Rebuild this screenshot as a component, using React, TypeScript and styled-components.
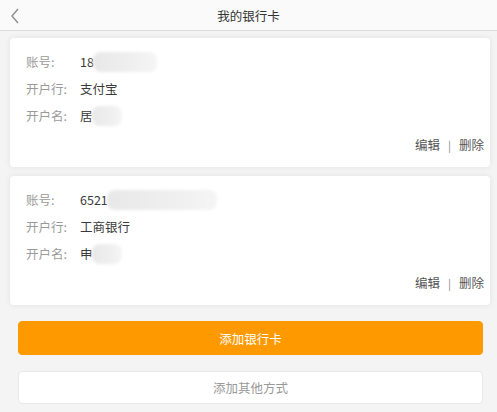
import React from 'react'
import styled, { createGlobalStyle } from 'styled-components'

const GlobalStyle = createGlobalStyle`
  html, body {
    margin: 0;
    padding: 0;
    background: #f4f4f4;
    font-family: "Noto Sans CJK SC", "Liberation Sans", sans-serif;
  }
`

type Card = {
  account: string
  accountBlur: number
  bank: string
  name: string
  nameBlur: number
}

const cards: Card[] = [
  { account: '18', accountBlur: 64, bank: '支付宝', name: '居', nameBlur: 30 },
  { account: '6521', accountBlur: 110, bank: '工商银行', name: '申', nameBlur: 30 },
]

function App() {
  return (
    <>
      <GlobalStyle />
      <Page>
        <Header>
          <Back>
            <svg width="10" height="16" viewBox="0 0 10 16">
              <path d="M8 1 L2 8 L8 15" fill="none" stroke="#8a8a8a" strokeWidth="1.3" />
            </svg>
          </Back>
          <Title>我的银行卡</Title>
        </Header>
        <List>
          {cards.map((c, i) => (
            <CardBox key={i}>
              <Row>
                <Label>账号:</Label>
                <Value>
                  {c.account}
                  <Blur $w={c.accountBlur} />
                </Value>
              </Row>
              <Row>
                <Label>开户行:</Label>
                <Value>{c.bank}</Value>
              </Row>
              <Row>
                <Label>开户名:</Label>
                <Value>
                  {c.name}
                  <Blur $w={c.nameBlur} />
                </Value>
              </Row>
              <Actions>
                <span>编辑</span>
                <Sep>|</Sep>
                <span>删除</span>
              </Actions>
            </CardBox>
          ))}
        </List>
        <Buttons>
          <Button $primary>添加银行卡</Button>
          <Button>添加其他方式</Button>
        </Buttons>
      </Page>
    </>
  )
}

const Page = styled.div`
  width: 497px;
  min-height: 412px;
  background: #f4f4f4;
`

const Header = styled.header`
  position: relative;
  height: 30px;
  background: #fafafa;
  border-bottom: 1px solid #dcdcdc;
  display: flex;
  align-items: center;
  justify-content: center;
`

const Back = styled.div`
  position: absolute;
  left: 10px;
  top: 8px;
  display: flex;
`

const Title = styled.h1`
  margin: 0;
  font-size: 12.5px;
  font-weight: normal;
  color: #333;
`

const List = styled.div`
  padding: 7px 7px 0 10px;
  display: flex;
  flex-direction: column;
  gap: 9px;
`

const CardBox = styled.div`
  background: #fff;
  border-radius: 4px;
  box-shadow: 0 0 6px rgba(0, 0, 0, 0.08);
  padding: 10px 6px 9px 16px;
`

const Row = styled.div`
  display: flex;
  align-items: center;
  height: 27px;
  font-size: 12.5px;
`

const Label = styled.span`
  width: 54px;
  color: #9a9a9a;
`

const Value = styled.span`
  display: flex;
  align-items: center;
  color: #3a3a3a;
`

const Blur = styled.span<{ $w: number }>`
  display: inline-block;
  width: ${p => p.$w}px;
  height: 20px;
  margin-left: -1px;
  border-radius: 8px;
  background: linear-gradient(90deg, #e8e8e8, #efefef 60%, #f5f5f5);
  filter: blur(1.5px);
`

const Actions = styled.div`
  display: flex;
  justify-content: flex-end;
  align-items: center;
  height: 27px;
  margin-top: 2px;
  font-size: 12.5px;
  color: #555;
`

const Sep = styled.span`
  margin: 0 8px;
  color: #888;
  font-size: 11px;
`

const Buttons = styled.div`
  padding: 16px 14px 0 18px;
  display: flex;
  flex-direction: column;
  gap: 16px;
`

const Button = styled.button<{ $primary?: boolean }>`
  height: ${p => (p.$primary ? 34 : 33)}px;
  border-radius: 4px;
  font-family: inherit;
  font-size: 12.5px;
  border: 1px solid ${p => (p.$primary ? '#ff9900' : '#e8e8e8')};
  background: ${p => (p.$primary ? '#ff9900' : '#fff')};
  color: ${p => (p.$primary ? '#fff' : '#999')};
`

export default App
